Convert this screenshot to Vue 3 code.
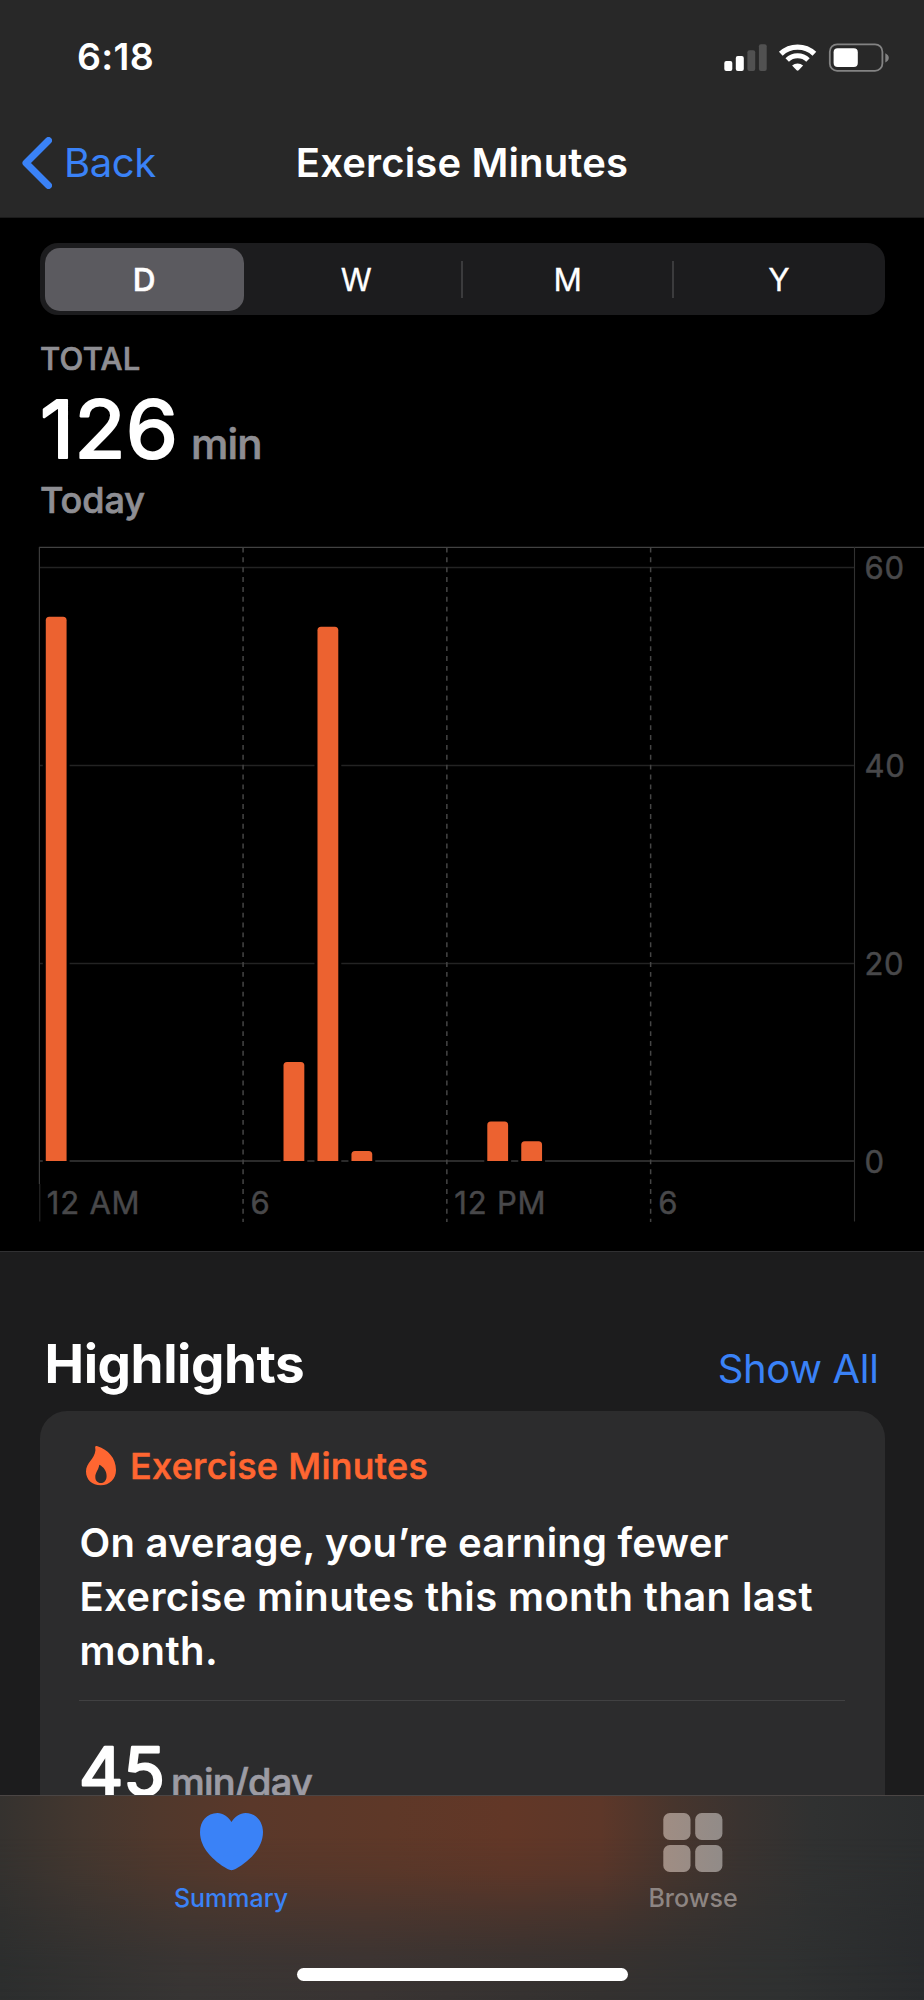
<script setup>
const ranges = ['D', 'W', 'M', 'Y']

const plot = { left: 39.3, right: 854.4, top: 19, base: 633, unit: 9.895 }
const hourWidth = (plot.right - plot.left) / 24

const bars = [
  { hour: 0, value: 55 },
  { hour: 7, value: 10 },
  { hour: 8, value: 54 },
  { hour: 9, value: 1 },
  { hour: 13, value: 4 },
  { hour: 14, value: 2 },
].map((b) => {
  const x = plot.left + hourWidth * (b.hour + 0.5) - 10.5
  const y = plot.base - b.value * plot.unit
  return {
    ...b,
    x,
    path: `M${x} ${plot.base}V${y + 3.5}q0-3.5 3.5-3.5h13.8q3.5 0 3.5 3.5V${plot.base}z`,
  }
})

const gridlines = [60, 40, 20].map((value) => ({
  value,
  y: Math.round(plot.base - value * plot.unit) + 0.5,
}))

const hours = [
  { hour: 0, label: '12 AM' },
  { hour: 6, label: '6' },
  { hour: 12, label: '12 PM' },
  { hour: 18, label: '6' },
].map((h) => ({ ...h, x: plot.left + hourWidth * h.hour }))
</script>

<template>
  <div class="screen">
    <header class="header">
      <div class="status">
        <span class="clock">6:18</span>
        <svg class="status-icons" width="168" height="30" viewBox="722 41 168 30">
          <rect x="724.3" y="60" width="8" height="10" rx="2" fill="#fff" />
          <rect x="735.8" y="55" width="8" height="15" rx="2" fill="#fff" />
          <rect x="747.4" y="49.3" width="7.8" height="20.7" rx="2" fill="#515151" />
          <rect x="758.9" y="43.3" width="7.8" height="26.7" rx="2" fill="#515151" />
          <g fill="none" stroke="#fff">
            <path d="M780.8 52.8a24.5 24.5 0 0 1 33.6 0" stroke-width="5.4" />
            <path d="M787.2 59a15 15 0 0 1 20.8 0" stroke-width="5" />
          </g>
          <path d="M792.1 64.6a8 8 0 0 1 11 0l-4.5 4.6q-1 .9-2 0z" fill="#fff" />
          <rect x="829.8" y="43.3" width="52.6" height="26.6" rx="7.4" fill="none" stroke="#838383" stroke-width="1.8" />
          <rect x="833.6" y="47.2" width="24.2" height="18.8" rx="4" fill="#fff" />
          <path d="M885.3 52.2q3.5 1.6 3.5 4.6t-3.5 4.6z" fill="#838383" />
        </svg>
      </div>
      <nav class="nav">
        <a class="back">
          <svg width="30" height="52" viewBox="0 0 30 52">
            <path d="M26.500 3.500 4 26l22.500 22.500" fill="none" stroke="#3a82f7" stroke-width="7" stroke-linecap="round" stroke-linejoin="round" />
          </svg>
          <span>Back</span>
        </a>
        <h1 class="title">Exercise Minutes</h1>
      </nav>
    </header>

    <section class="data">
      <div class="segments">
        <button v-for="(r, i) in ranges" :key="r" class="segment" :class="{ active: i === 0, divided: i > 1 }">{{ r }}</button>
      </div>

      <div class="total">
        <div class="total-label">TOTAL</div>
        <div class="total-value">
          <svg class="rounded-number" width="151" height="73" viewBox="0 0 151 73">
            <text x="0" y="72" class="n126" textLength="138" lengthAdjust="spacingAndGlyphs">126</text>
          </svg>
          <span class="unit">min</span>
        </div>
        <div class="total-date">Today</div>
      </div>

      <svg class="chart" width="924" height="705" viewBox="0 0 924 705">
        <g class="grid">
          <path v-for="g in gridlines" :key="g.value" :d="`M39.3 ${g.y}H854.4`" stroke="#232323" stroke-width="1.3" />
          <path d="M39.3 633H854.4" stroke="#2b2b2b" stroke-width="1.8" />
        </g>
        <rect v-for="b in bars" :key="'h' + b.hour" :x="b.x - 3" :y="plot.base - b.value * plot.unit - 3" width="26.8" :height="b.value * plot.unit + 4" fill="#000" />
        <path d="M39 19.4H924" stroke="#424242" stroke-width="1.2" />
        <path d="M39.4 19V656" stroke="#3b3b3b" stroke-width="1.2" />
        <path d="M39.8 656V693.5" stroke="#2d2d2d" />
        <path d="M854.5 19V693.5" stroke="#313131" stroke-width="1.1" />
        <path v-for="h in hours.slice(1)" :key="'d' + h.hour" :d="`M${h.x} 19.5V694`" stroke="#454545" stroke-width="1.5" stroke-dasharray="4.9 4.97" />
        <path v-for="b in bars" :key="b.hour" :d="b.path" fill="#ec6230" />
        <g class="axis">
          <text v-for="h in hours" :key="'t' + h.hour" :x="h.x + 7.5" y="686">{{ h.label }}</text>
          <text v-for="g in gridlines" :key="'v' + g.value" x="864.4" :y="g.y + 11.3">{{ g.value }}</text>
          <text x="864.4" y="644.6">0</text>
        </g>
      </svg>
    </section>

    <section class="highlights">
      <div class="section-head">
        <h2>Highlights</h2>
        <a>Show All</a>
      </div>
      <article class="card">
        <div class="card-head">
          <svg width="30" height="40" viewBox="0 0 30 40">
            <path fill="#ff6631" fill-rule="evenodd" d="M9.4.5C9.8-.1 10.600 0 11.500.2C22 3.500 30 12 30 24C30 33 23.500 39.300 14.700 39.300C6 39.300 0 33.500 0 25.500C0 16.500 8.500 13.500 9.400 4.500C9.500 2.500 8.800 1.300 9.400.5ZM13.300 18.800C12.600 24 9.300 26.500 9.300 31C9.300 34.500 11.500 37 14.900 37C18.300 37 20.600 34.300 20.600 30C20.600 25 17.500 20.800 13.300 18.800Z" />
          </svg>
          <span>Exercise Minutes</span>
        </div>
        <p class="summary">
          <span class="l1">On average, you’re earning fewer</span><br />
          <span class="l2">Exercise minutes this month than last</span><br />
          <span class="l2">month.</span>
        </p>
        <div class="average">
          <svg class="rounded-number" width="92" height="58" viewBox="0 0 92 58">
            <text x="0" y="57" class="n45" textLength="86" lengthAdjust="spacingAndGlyphs">45</text>
          </svg>
          <span class="average-unit">min/day</span>
        </div>
      </article>
    </section>

    <footer class="tabbar">
      <div class="glow"></div>
      <div class="tabs">
        <a class="tab selected">
          <svg width="63" height="60" viewBox="0 0 63 60">
            <path fill="#3a82f7" d="M31.500 9C28 3.500 23 0 17.500 0C7 0 0 8.500 0 19C0 35 13 47.500 27.500 56C30 57.500 33 57.500 35.500 56C50 47.500 63 35 63 19C63 8.500 56 0 45.500 0C40 0 35 3.500 31.500 9Z" />
          </svg>
          <span>Summary</span>
        </a>
        <a class="tab">
          <svg width="60" height="60" viewBox="0 0 60 60">
            <linearGradient id="tile" x1="0" x2="60" gradientUnits="userSpaceOnUse">
              <stop offset="0" stop-color="#a08d83" />
              <stop offset="1" stop-color="#918b88" />
            </linearGradient>
            <g fill="url(#tile)">
              <rect x="0.300" y="0" width="27.200" height="27" rx="6.500" />
              <rect x="32.200" y="0" width="27.200" height="27" rx="6.500" />
              <rect x="0.300" y="32" width="27.200" height="27" rx="6.500" />
              <rect x="32.200" y="32" width="27.200" height="27" rx="6.500" />
            </g>
          </svg>
          <span>Browse</span>
        </a>
      </div>
      <div class="home"></div>
    </footer>
  </div>
</template>

<style>
body {
  background: #000;
}
</style>

<style scoped>
.screen {
  position: relative;
  width: 924px;
  height: 2000px;
  overflow: hidden;
  background: #1c1c1d;
  color: #fff;
  font-family: Inter, "Liberation Sans", sans-serif;
}
h1, h2, p {
  margin: 0;
}
.header {
  box-sizing: border-box;
  height: 218px;
  background: #282828;
  border-bottom: 1px solid #1b1b1b;
}
.status {
  display: flex;
  justify-content: space-between;
  align-items: center;
  height: 113px;
  padding: 0 34px 0 77px;
}
.clock {
  font-size: 37.500px;
  font-weight: 600;
  letter-spacing: .3px;
}
.nav {
  display: grid;
  grid-template-columns: 1fr auto 1fr;
  align-items: center;
  height: 99px;
}
.back {
  display: flex;
  align-items: center;
  gap: 12px;
  padding-left: 22px;
  font-size: 40px;
  letter-spacing: -.4px;
  color: #3a82f7;
}
.title {
  font-size: 40px;
  font-weight: 600;
  letter-spacing: .15px;
}
.data {
  height: 1033px;
  background: #000;
  border-bottom: 1px solid #303032;
}
.segments {
  display: grid;
  grid-template-columns: repeat(4, 1fr);
  box-sizing: border-box;
  height: 72px;
  margin: 0 39.500px;
  position: relative;
  top: 25px;
  padding: 4.500px 0;
  background: #1c1c1e;
  border-radius: 18px;
}
.segment {
  position: relative;
  border: 0;
  padding: 0;
  background: none;
  border-radius: 15px;
  color: #fff;
  font: 400 31.500px Inter, sans-serif;
  -webkit-text-stroke: .3px;
}
.segment.active {
  background: #5b5a5f;
  font-weight: 500;
  -webkit-text-stroke: .6px;
  margin: 0 7px 0 5px;
}
.segment.divided::before {
  content: "";
  position: absolute;
  left: -1px;
  top: 13px;
  width: 2px;
  height: 37px;
  background: #3b3b3d;
}
.total {
  padding: 52px 0 0 40px;
  color: #8e8e93;
  font-weight: 500;
  -webkit-text-stroke: .7px;
}
.total-label {
  height: 34px;
  line-height: 34px;
  font-size: 31px;
  letter-spacing: .3px;
}
.total-value {
  display: flex;
  align-items: baseline;
  height: 84px;
  margin-top: 10px;
}
.rounded-number {
  flex: none;
  overflow: visible;
}
.rounded-number text {
  fill: #fff;
  -webkit-text-stroke: 0;
  stroke: #fff;
  stroke-linejoin: round;
}
.rounded-number .n126 {
  font-size: 80px;
  font-weight: 400;
  stroke-width: 2.200px;
}
.rounded-number .n45 {
  font-size: 65.500px;
  font-weight: 400;
  stroke-width: 2.400px;
}
.unit {
  font-size: 42px;
  letter-spacing: -.8px;
}
.total-date {
  height: 40px;
  line-height: 40px;
  font-size: 36px;
  letter-spacing: -.1px;
  margin-top: 10px;
}
.chart {
  display: block;
  margin-top: 8px;
}
.axis text {
  font-size: 31px;
  font-weight: 400;
  letter-spacing: .8px;
  fill: #48484a;
  stroke: #48484a;
  stroke-width: .5px;
}
.highlights {
  padding: 0 39.500px;
}
.section-head {
  display: flex;
  justify-content: space-between;
  align-items: baseline;
  height: 77px;
  padding: 82px 6px 0 5px;
}
.section-head h2 {
  font-size: 53px;
  line-height: 60px;
  font-weight: 700;
  letter-spacing: -.45px;
}
.section-head a {
  font-size: 40px;
  letter-spacing: -.35px;
  color: #3a82f7;
}
.card {
  height: 500px;
  padding: 34px 40px 0 39.500px;
  background: #2c2c2d;
  border-radius: 27px;
}
.card-head {
  display: flex;
  align-items: center;
  height: 42px;
  padding-left: 7px;
  gap: 14px;
  font-size: 36px;
  font-weight: 500;
  letter-spacing: .32px;
  -webkit-text-stroke: .6px;
  color: #ff6631;
}
.summary {
  margin-top: 28.500px;
  padding: 0 0 22px .5px;
  border-bottom: 1px solid #414142;
  font-size: 40px;
  font-weight: 600;
  line-height: 54.300px;
  white-space: nowrap;
}
.l1 {
  letter-spacing: .2px;
}
.l2 {
  letter-spacing: .37px;
}
.average {
  display: flex;
  align-items: baseline;
  margin-top: 37px;
  font-weight: 500;
  color: #9c9ba3;
}
.average-unit {
  font-size: 38px;
  letter-spacing: -.8px;
  -webkit-text-stroke: .7px;
}
.tabbar {
  position: absolute;
  left: 0;
  right: 0;
  bottom: 0;
  box-sizing: border-box;
  height: 205px;
  border-top: 1px solid #4a4544;
  background: linear-gradient(to right, #2c2e2e 0, #373534 20%, #393433 40%, #333130 65%, #2f3131 85%, #292b2d 100%);
}
.glow {
  position: absolute;
  inset: 0;
  background: linear-gradient(to right, #35322f 0, #44372f 9%, #50382c 17%, #5a382a 27%, #5e3828 42%, #623727 55%, #5d3729 65%, #47352d 73%, #3a3330 80%, #303131 88%, #2b2d2e 100%);
  -webkit-mask-image: linear-gradient(to bottom, #000 0, #000 20%, rgba(0, 0, 0, .85) 38%, rgba(0, 0, 0, .42) 60%, rgba(0, 0, 0, .12) 78%, transparent 100%);
  mask-image: linear-gradient(to bottom, #000 0, #000 20%, rgba(0, 0, 0, .85) 38%, rgba(0, 0, 0, .42) 60%, rgba(0, 0, 0, .12) 78%, transparent 100%);
}
.tabs {
  position: relative;
  display: grid;
  grid-template-columns: 1fr 1fr;
  padding-top: 17px;
}
.tab {
  display: flex;
  flex-direction: column;
  align-items: center;
  gap: 10px;
  font-size: 25px;
  font-weight: 500;
  line-height: 30px;
  color: #8d8582;
}
.tab.selected {
  color: #3a82f7;
}
.home {
  position: relative;
  width: 331px;
  height: 12.500px;
  margin: 55px auto 0;
  border-radius: 7px;
  background: #fff;
}
</style>
